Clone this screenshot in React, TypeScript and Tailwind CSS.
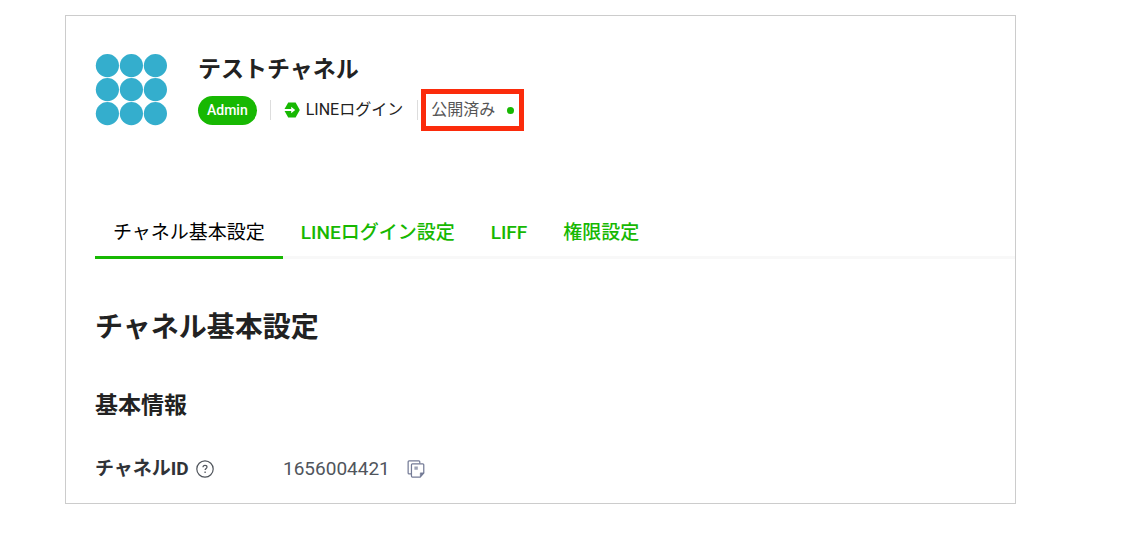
const tabs = ["チャネル基本設定", "LINEログイン設定", "LIFF", "権限設定"];

function ChannelLogo() {
  const centers = [12, 36, 60];
  return (
    <svg className="mt-px size-[72px] shrink-0" viewBox="0 0 72 72" fill="#34aecd" role="img" aria-label="テストチャネル">
      {centers.map((cy) => centers.map((cx) => <circle key={`${cx}-${cy}`} cx={cx + 0.4} cy={cy - 0.4} r="11.6" />))}
    </svg>
  );
}

function LoginIcon() {
  return (
    <svg className="size-4 shrink-0" viewBox="0 0 16 16" aria-hidden="true">
      <path d="M4.2 .6h7.4L15.8 8l-4.2 7.4H4.2L.4 8.8V7.2z" fill="#17b802" />
      <path d="M0 7h7.2V4.8L11.2 8l-4 3.2V9H0z" fill="#fff" />
    </svg>
  );
}

function HelpIcon() {
  return (
    <svg className="size-[18px]" viewBox="0 0 18 18" fill="none" stroke="#50555c" aria-hidden="true">
      <circle cx="9" cy="9" r="8.2" strokeWidth="1.2" />
      <path d="M7 7.2c0-1.2.8-1.9 2-1.9s2 .8 2 1.8c0 1.3-1.9 1.4-1.9 3" strokeWidth="1.2" />
      <path d="M9.1 11.4v1.5" strokeWidth="1.3" />
    </svg>
  );
}

function CopyIcon() {
  return (
    <svg className="size-[18px]" viewBox="0 0 19 19" fill="none" stroke="#747b96" strokeWidth="1.3" aria-hidden="true">
      <path d="M4.5 14.6H2.2c-.7 0-1-.4-1-1V1.9c0-.6.4-1 1-1h10.3c.6 0 1 .4 1 1v1.8" />
      <path d="M5.7 4h11c.6 0 1 .4 1 1v8.7L13.9 18H5.7c-.6 0-1-.4-1-1V5c0-.6.4-1 1-1z" />
      <path d="M17.5 13.6h-3.4v4z" fill="#747b96" strokeWidth=".8" />
      <path d="M7.8 7.8h3.6M7.8 9.4h3.6" strokeWidth="1.8" opacity=".7" />
    </svg>
  );
}

export default function App() {
  return (
    <div className="bg-white pt-[15px] pr-[132px] pb-10 pl-[65px] font-[Roboto,'Noto_Sans_CJK_JP',sans-serif] text-[#222]" lang="ja">
      <main className="border border-[#ccc] pt-[37px] pb-5 pl-[29px]">
        <header className="flex gap-[31px]">
          <ChannelLogo />
          <div>
            <h1 className="pt-px text-[23px] leading-8 font-bold">テストチャネル</h1>
            <div className="mt-[3px] flex h-[42px] items-center text-[16px] leading-6 whitespace-nowrap">
              <span className="flex h-[29px] items-center rounded-full bg-[#17b802] px-[9px] text-[14px] font-medium text-white">Admin</span>
              <span className="ml-[13px] h-5 w-px bg-[#ddd]" />
              <span className="ml-[13px] flex items-center gap-[6px]">
                <LoginIcon />
                LINEログイン
              </span>
              <span className="ml-[14px] h-5 w-px bg-[#ddd]" />
              <span className="ml-[3px] flex h-full items-center gap-3 border-[5px] border-[#fb2b0b] px-[5px] text-[#555]">
                公開済み
                <span className="size-[7px] rounded-full bg-[#17b802]" />
              </span>
            </div>
          </div>
        </header>

        <nav className="mt-[76px] flex border-b-[3px] border-[#f8f8f8] text-[19px] leading-7">
          {tabs.map((tab, i) => (
            <a
              key={tab}
              href="#"
              aria-current={i === 0 ? "page" : undefined}
              className={
                i === 0
                  ? "-mb-[3px] border-b-[3px] border-[#17b802] px-[18px] pt-3 pb-[9px] text-black"
                  : "px-[18px] pt-3 pb-[9px] font-medium text-[#17b802]"
              }
            >
              {tab}
            </a>
          ))}
        </nav>

        <h2 className="mt-[49px] text-[28px] leading-10 font-bold">チャネル基本設定</h2>
        <h3 className="mt-[42px] text-[23px] leading-8 font-bold">基本情報</h3>
        <dl className="mt-[33px] flex items-center text-[19px] leading-7">
          <dt className="flex w-[188px] items-center gap-[7px] font-bold text-[#303338]">
            チャネルID
            <button type="button" aria-label="ヘルプ">
              <HelpIcon />
            </button>
          </dt>
          <dd className="flex items-center gap-[17px] text-[#50555c]">
            1656004421
            <button type="button" aria-label="コピー">
              <CopyIcon />
            </button>
          </dd>
        </dl>
      </main>
    </div>
  );
}
